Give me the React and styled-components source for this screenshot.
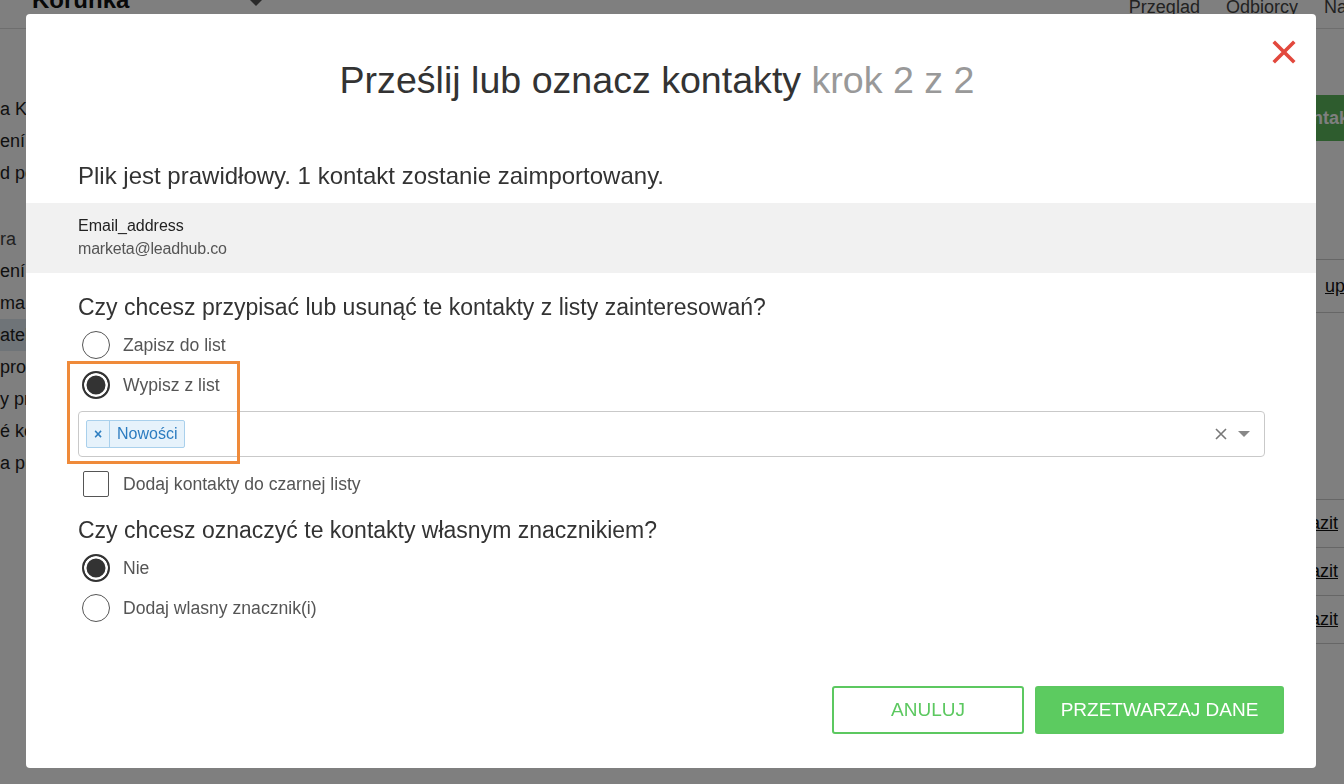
import styled, { createGlobalStyle } from 'styled-components'

const GlobalStyle = createGlobalStyle`
  html, body {
    margin: 0;
    overflow: hidden;
  }
  body {
    font-family: "Liberation Sans", Arial, sans-serif;
    background: #fff;
  }
`

/* ---------- page behind the dialog ---------- */

const Shell = styled.div`
  width: 100%;
  height: 784px;
  overflow: hidden;
  background: #fff;
  color: #222;
  display: flex;
  flex-direction: column;
`

const TopBar = styled.header`
  width: 1440px;
  height: 12px;
  display: flex;
  align-items: flex-end;
  padding-left: 32px;
  box-sizing: border-box;
  gap: 26px;
`

const Brand = styled.div`
  font-size: 24px;
  line-height: 24px;
  font-weight: 700;
  color: #111;
  width: 190px;
  flex-shrink: 0;
`

const Caret = styled.span`
  width: 0;
  height: 0;
  border-left: 8px solid transparent;
  border-right: 8px solid transparent;
  border-top: 8px solid #555;
  margin-bottom: 6px;
`

const Nav = styled.nav`
  margin-left: auto;
  display: flex;
  gap: 26px;
  padding-right: 18px;
  transform: translateY(6px);
`

const NavItem = styled.span`
  font-size: 18px;
  color: #444;
`

const Body = styled.div`
  width: 1440px;
  flex: 1;
  display: flex;
  margin-top: 16px;
  border-top: 1px solid #ddd;
`

const Sidebar = styled.aside`
  width: 200px;
  padding-top: 64px;
  display: flex;
  flex-direction: column;
`

const SideItem = styled.div`
  height: 32px;
  display: flex;
  align-items: center;
  font-size: 18px;
  color: ${({ $head }) => ($head ? '#444' : '#222')};
  background: ${({ $active }) => ($active ? '#dfe8f0' : 'transparent')};
  margin-top: ${({ $gap }) => ($gap ? '34px' : '0')};
  white-space: nowrap;
`

const Main = styled.main`
  flex: 1;
  display: flex;
  flex-direction: column;
`

const Toolbar = styled.div`
  display: flex;
  justify-content: flex-end;
  padding: 66px 52px 0 0;
`

const GreenAction = styled.span`
  height: 46px;
  padding: 0 14px;
  display: flex;
  align-items: center;
  background: #5cb85c;
  color: #fff;
  font-size: 18px;
  font-weight: 700;
  border-radius: 3px;
  width: 136px;
`

const TableRow = styled.div`
  height: ${({ $h }) => $h}px;
  border-bottom: 1px solid #ccc;
  display: flex;
  align-items: center;
  justify-content: flex-end;
  padding-right: ${({ $pr }) => $pr || 102}px;
`

const RowLink = styled.span`
  font-size: 18px;
  color: #111;
  text-decoration: underline;
`

/* ---------- dialog ---------- */

const Backdrop = styled.div`
  position: fixed;
  inset: 0;
  background: rgba(0, 0, 0, 0.5);
  padding: 14px 28px 16px 26px;
  display: flex;
`

const Modal = styled.div`
  position: relative;
  flex: 1;
  background: #fff;
  border-radius: 4px;
  display: flex;
  flex-direction: column;
  color: #333;
`

const Header = styled.div`
  display: grid;
  grid-template-columns: 1fr 80px;
  align-items: start;
  padding: 26px 0 0 52px;
`

const Title = styled.h2`
  margin: 18px 0 0;
  font-size: 37.6px;
  line-height: 44px;
  font-weight: 400;
  text-align: center;
  color: #333;
`

const Step = styled.span`
  color: #999;
`

const CloseButton = styled.button`
  justify-self: end;
  margin-right: 20px;
  width: 24px;
  height: 24px;
  padding: 0;
  border: 0;
  background: none;
  display: flex;
`

const Section = styled.div`
  padding: 0 51px 0 52px;
  display: flex;
  flex-direction: column;
`

const Lead = styled.p`
  margin: 59px 0 12px;
  font-size: 24px;
  line-height: 30px;
  color: #333;
`

const Preview = styled.div`
  background: #f1f1f1;
  padding: 12px 52px 12px;
  display: flex;
  flex-direction: column;
`

const FieldName = styled.div`
  font-size: 16px;
  line-height: 22px;
  color: #222;
`

const FieldValue = styled.div`
  font-size: 16px;
  line-height: 24px;
  color: #555;
  letter-spacing: -0.2px;
`

const Question = styled.h3`
  margin: ${({ $mt }) => $mt}px 0 0;
  font-size: 23px;
  line-height: 28px;
  font-weight: 400;
  color: #333;
`

const Options = styled.div`
  display: flex;
  flex-direction: column;
  gap: 12px;
  margin-top: ${({ $mt }) => $mt}px;
`

const Option = styled.label`
  display: flex;
  align-items: center;
  gap: 13px;
  padding-left: 4px;
  height: 28px;
  font-size: 17.6px;
  color: #555;
`

const Radio = styled.span`
  box-sizing: border-box;
  width: 28px;
  height: 28px;
  flex-shrink: 0;
  border-radius: 50%;
  border: ${({ $checked }) => ($checked ? '2px solid #333' : '1.5px solid #555')};
  background: ${({ $checked }) => ($checked ? '#333' : '#fff')};
  box-shadow: ${({ $checked }) => ($checked ? 'inset 0 0 0 2.5px #fff' : 'none')};
`

const Checkbox = styled.span`
  box-sizing: border-box;
  width: 26px;
  height: 26px;
  flex-shrink: 0;
  border: 1.5px solid #555;
  border-radius: 2px;
  background: #fff;
`

const CheckOption = styled(Option)`
  padding-left: 5px;
  gap: 14px;
  height: 26px;
  margin-top: 14px;
`

const TagSelect = styled.div`
  box-sizing: border-box;
  height: 46px;
  margin-top: 12px;
  border: 1px solid #c9c9c9;
  border-radius: 4px;
  display: flex;
  align-items: center;
  padding: 0 14px 0 7px;
  gap: 10px;
`

const Tag = styled.span`
  height: 28px;
  box-sizing: border-box;
  display: flex;
  align-items: stretch;
  border: 1px solid #a9d0ec;
  background: #e6f2fb;
  border-radius: 2px;
`

const TagRemove = styled.span`
  width: 22px;
  display: flex;
  align-items: center;
  justify-content: center;
  border-right: 1px solid #a9d0ec;
  color: #2f7fc1;
  font-size: 14px;
  font-weight: 700;
`

const TagLabel = styled.span`
  display: flex;
  align-items: center;
  padding: 0 7px;
  font-size: 16px;
  color: #2c7cc0;
`

const Spacer = styled.span`
  flex: 1;
`

const ClearIcon = styled.span`
  display: flex;
  width: 14px;
  height: 14px;
`

const Arrow = styled.span`
  width: 0;
  height: 0;
  border-left: 6px solid transparent;
  border-right: 6px solid transparent;
  border-top: 6px solid #888;
`

const Highlight = styled.div`
  position: absolute;
  left: 41px;
  top: 347px;
  width: 173px;
  height: 103px;
  box-sizing: border-box;
  border: 3px solid #ef8a3a;
  pointer-events: none;
`

const Footer = styled.div`
  margin-top: auto;
  display: flex;
  justify-content: flex-end;
  gap: 11px;
  padding: 0 32px 34px 0;
`

const Button = styled.button`
  box-sizing: border-box;
  height: 48px;
  width: ${({ $w }) => $w}px;
  border-radius: 3px;
  font-family: "Liberation Sans", Arial, sans-serif;
  font-size: 19px;
  text-transform: uppercase;
  border: 2px solid #5cc860;
  background: ${({ $primary }) => ($primary ? '#5ccb60' : '#fff')};
  color: ${({ $primary }) => ($primary ? '#fff' : '#5cc860')};
`

const sideItems = [
  { t: 'a Kontakty' },
  { t: 'ení kontaktů' },
  { t: 'd pole' },
  { t: 'ra', head: true, gap: true },
  { t: 'ení kampaní' },
  { t: ' ma' },
  { t: 'atel', active: true },
  { t: ' pro' },
  { t: 'y pro' },
  { t: 'é kód' },
  { t: 'a pro' },
]

function Background() {
  return (
    <Shell>
      <TopBar>
        <Brand>Korunka</Brand>
        <Caret />
        <Nav>
          <NavItem>Przeglad</NavItem>
          <NavItem>Odbiorcy</NavItem>
          <NavItem>Nastawienia</NavItem>
        </Nav>
      </TopBar>
      <Body>
        <Sidebar>
          {sideItems.map((s, i) => (
            <SideItem key={i} $head={s.head} $gap={s.gap} $active={s.active}>
              {s.t}
            </SideItem>
          ))}
        </Sidebar>
        <Main>
          <Toolbar>
            <GreenAction>Nowy kontakt</GreenAction>
          </Toolbar>
          <TableRow $h={118} />
          <TableRow $h={52} $pr={61}>
            <RowLink>upravit</RowLink>
          </TableRow>
          <TableRow $h={186} />
          <TableRow $h={47}>
            <RowLink>Zobrazit</RowLink>
          </TableRow>
          <TableRow $h={47}>
            <RowLink>Zobrazit</RowLink>
          </TableRow>
          <TableRow $h={47}>
            <RowLink>Zobrazit</RowLink>
          </TableRow>
        </Main>
      </Body>
    </Shell>
  )
}

export default function App() {
  return (
    <>
      <GlobalStyle />
      <Background />
      <Backdrop>
        <Modal>
          <Header>
            <Title>
              Prześlij lub oznacz kontakty <Step>krok 2 z 2</Step>
            </Title>
            <CloseButton aria-label="Zamknij">
              <svg width="24" height="24" viewBox="0 0 24 24">
                <path d="M3 3 L21 21 M21 3 L3 21" stroke="#e2483d" strokeWidth="3.6" strokeLinecap="square" />
              </svg>
            </CloseButton>
          </Header>

          <Section>
            <Lead>Plik jest prawidłowy. 1 kontakt zostanie zaimportowany.</Lead>
          </Section>

          <Preview>
            <FieldName>Email_address</FieldName>
            <FieldValue>marketa@leadhub.co</FieldValue>
          </Preview>

          <Section>
            <Question $mt={20}>Czy chcesz przypisać lub usunąć te kontakty z listy zainteresowań?</Question>
            <Options $mt={10}>
              <Option>
                <Radio />
                Zapisz do list
              </Option>
              <Option>
                <Radio $checked />
                Wypisz z list
              </Option>
            </Options>
            <TagSelect>
              <Tag>
                <TagRemove>×</TagRemove>
                <TagLabel>Nowości</TagLabel>
              </Tag>
              <Spacer />
              <ClearIcon>
                <svg width="14" height="14" viewBox="0 0 14 14">
                  <path d="M2 2 L12 12 M12 2 L2 12" stroke="#777" strokeWidth="1.6" />
                </svg>
              </ClearIcon>
              <Arrow />
            </TagSelect>
            <CheckOption>
              <Checkbox />
              Dodaj kontakty do czarnej listy
            </CheckOption>

            <Question $mt={19}>Czy chcesz oznaczyć te kontakty własnym znacznikiem?</Question>
            <Options $mt={10}>
              <Option>
                <Radio $checked />
                Nie
              </Option>
              <Option>
                <Radio />
                Dodaj wlasny znacznik(i)
              </Option>
            </Options>
          </Section>

          <Highlight />

          <Footer>
            <Button $w={192}>Anuluj</Button>
            <Button $w={249} $primary>Przetwarzaj dane</Button>
          </Footer>
        </Modal>
      </Backdrop>
    </>
  )
}
